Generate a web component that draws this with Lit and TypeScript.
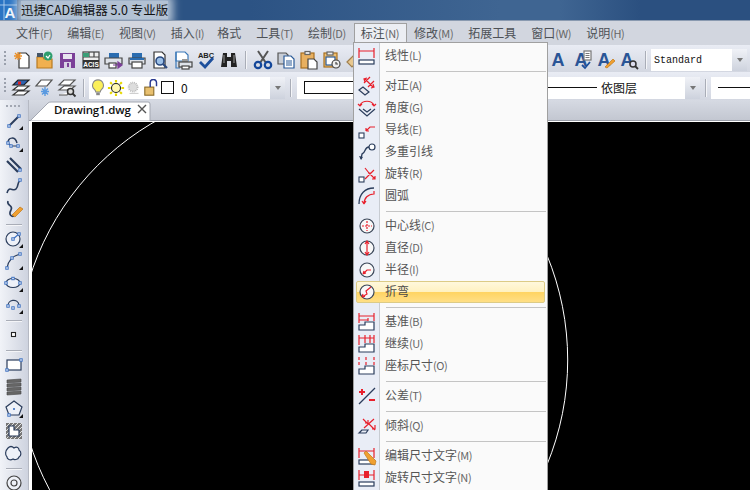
import { LitElement, html, css, svg } from "lit";
import { customElement } from "lit/decorators.js";

const NAVY = "#2b3d5c", RED = "#e8202c", BLUE = "#3c70c0";
const wrap = (b: unknown) => html`<svg class="ic" viewBox="0 0 20 20" fill="none" stroke-width="1.2">${b}</svg>`;
const h = (x: number, y: number) => svg`<rect x=${x - 1.2} y=${y - 1.2} width="2.400" height="2.400" fill="#fff" stroke=${BLUE} stroke-width="1"/>`;
const tri = svg`<path d="M19 15v4h-4z" fill="#111"/>`;

const tb1 = [
  svg`<path d="M7 3h7l3 3v12H7z" fill="#fff" stroke="#333"/><path d="M6 2v8M2 6h8M3 3l6 6M9 3L3 9" stroke="#e8902c" stroke-width="1.300"/>`,
  svg`<path d="M2 7h6l1 2h8v9H2z" fill="#f0b050" stroke="#b87a20"/><path d="M2 3h6v4H2z" fill="#456"/><circle cx="13" cy="6" r="4.500" fill="#2f9e6e"/><path d="M11 6l2 2 2-3" stroke="#fff"/>`,
  svg`<rect x="2" y="3" width="15" height="15" fill="#7b3f98"/><rect x="5" y="4" width="9" height="5" fill="#e8e4f0"/><rect x="6" y="12" width="7" height="6" fill="#d8d0e4"/><rect x="9" y="13" width="2" height="4" fill="#7b3f98"/>`,
  svg`<rect x="2" y="2" width="16" height="16" fill="#eee" stroke="#444"/><path d="M2 7h16M8 2v5M13 2v5" stroke="#444"/><rect x="2" y="3" width="6" height="4" fill="#3a9e78"/><rect x="2" y="10" width="16" height="8" fill="#333"/><text x="10" y="17" font-size="6.500" font-weight="700" text-anchor="middle" fill="#fff" stroke="none" font-family="Liberation Sans">ACIS</text>`,
  svg`<rect x="5" y="3" width="10" height="5" fill="#2a6cb0"/><path d="M1 8h17v6H1z" fill="#dfe3ea" stroke="#444"/><rect x="5" y="13" width="7" height="5" fill="#fff" stroke="#444"/><path d="M9 15h7M14 12l4 3-4 3z" fill="#7b3f98" stroke="#7b3f98"/>`,
  svg`<rect x="5" y="3" width="10" height="5" fill="#2a6cb0"/><path d="M2 8h16v6H2z" fill="#dfe3ea" stroke="#444"/><rect x="5" y="12" width="10" height="6" fill="#fff" stroke="#444"/><path d="M3 9h14" stroke="#2a6cb0" stroke-width="2"/>`,
  svg`<path d="M4 2h8l3 3v13H4z" fill="#fff" stroke="#333"/><circle cx="10" cy="11" r="4" fill="#9cc0e8" stroke="#2b4a80" stroke-width="1.600"/><path d="M13 14l4 4" stroke="#2b4a80" stroke-width="2.200"/>`,
  svg`<path d="M3 2h9l3 3v6H3z" fill="#fff" stroke="#3a78b8"/><path d="M3 2v16h4" stroke="#3a78b8"/><rect x="9" y="9" width="6" height="3" fill="#999"/><rect x="6" y="12" width="13" height="5" fill="#dfe3ea" stroke="#444"/><rect x="9" y="16" width="7" height="3" fill="#fff" stroke="#444"/>`,
  svg`<text x="10" y="7.500" font-size="7.500" font-weight="700" text-anchor="middle" fill="#222" stroke="none" font-family="Liberation Sans">ABC</text><path d="M4 12l5 5 8-9" stroke="#1d4f9c" stroke-width="2.800"/>`,
  svg`<path d="M4 3h4v4h4V3h4l2 14h-6v-6H8v6H2z" fill="#222"/><path d="M5 5v8M15 5v8" stroke="#888"/>`,
];
const tb1b = [
  svg`<path d="M5 1l8 12M15 1L7 13" stroke="#555" stroke-width="2"/><circle cx="5" cy="15" r="3.200" stroke="#14479a" stroke-width="2.200"/><circle cx="15" cy="15" r="3.200" stroke="#14479a" stroke-width="2.200"/>`,
  svg`<path d="M2 3h8l2 2v9H2z" fill="#c8cdd6" stroke="#555"/><path d="M8 6h7l3 3v9H8z" fill="#fff" stroke="#2a5a98"/><path d="M10 11h6M10 13h6M10 15h6" stroke="#2a5a98"/>`,
  svg`<rect x="2" y="3" width="13" height="15" fill="#e8b060" stroke="#a87020"/><rect x="6" y="1.500" width="5" height="3" fill="#eee" stroke="#666"/><path d="M9 9h6l3 3v7H9z" fill="#fff" stroke="#444"/>`,
  svg`<rect x="2" y="3" width="13" height="14" fill="#f0c070" stroke="#a87020"/><rect x="5" y="2" width="6" height="3" fill="#eee" stroke="#666"/><rect x="4" y="7" width="9" height="8" fill="#fff" stroke="#2a5a98"/><circle cx="14" cy="14" r="4" fill="#eee" stroke="#444"/><path d="M14 12v2h2" stroke="#444"/>`,
  svg`<path d="M2 12l8-8 5 5-8 8z" fill="#e8c890" stroke="#a08050"/><path d="M10 4l2-2 5 5-2 2z" fill="#777"/>`,
];
const abase = (x: unknown) => svg`<text x="8" y="16" font-size="18" font-weight="700" text-anchor="middle" fill="#2a5596" stroke="none" font-family="Liberation Sans">A</text>${x}`;
const tb1c = [
  abase(svg``),
  abase(svg`<rect x="11" y="1" width="7" height="9" fill="#fff" stroke="#777"/><path d="M12.500 3.500h4M12.500 5.500h4M12.500 7.500h4" stroke="#777"/><path d="M9 15l3 3 5-6" stroke="#1d4f9c" stroke-width="1.800"/>`),
  abase(svg`<path d="M9 17l8-8 2 2-8 7z" fill="#f0a030" stroke="#c07818" stroke-width=".7"/>`),
  abase(svg`<circle cx="14" cy="14" r="3" fill="#dde" stroke="#333" stroke-width="1.500"/><path d="M16 16l3 3" stroke="#333" stroke-width="1.800"/>`),
];
const tb2 = [
  svg`<path d="M2 7l5-5h11l-5 5z" fill="#2f62b0" stroke="#222"/><rect x="7" y="3.500" width="3" height="3" fill="#e02020"/><path d="M2 12l5-4h11l-5 4zM2 17l5-4h11l-5 4z" fill="#fff" stroke="#333"/>`,
  svg`<path d="M2 8l5-6h11l-5 6zM2 8h8" stroke="#555" fill="#fff"/><path d="M11 9v9M7 13.500h8M8 10.500l6 6M14 10.500l-6 6" stroke="#5a9ae0" stroke-width="1.400"/>`,
  svg`<path d="M2 7l5-5h11l-5 5zM2 12l5-4h11l-5 4zM2 17h8l2-3" stroke="#555" fill="#fff"/><circle cx="13.500" cy="13.500" r="3" fill="#ddd" stroke="#333" stroke-width="1.500"/><path d="M15.500 15.500l3 3" stroke="#333" stroke-width="1.800"/>`,
];
const bulb = wrap(svg`<path d="M10 1a6 6 0 0 0-4 10.500c1 1 1.500 2 1.500 3h5c0-1 .5-2 1.500-3A6 6 0 0 0 10 1z" fill="#fbef5a" stroke="#888"/><rect x="8" y="15" width="4" height="3" fill="#888"/>`);
const sun = wrap(svg`<circle cx="10" cy="10" r="5" fill="#fff8b0" stroke="#222"/><path d="M10 1v3M10 16v3M1 10h3M16 10h3M3.500 3.500l2 2M14.500 14.500l2 2M3.500 16.500l2-2M14.500 5.500l2-2" stroke="#e6d800" stroke-width="2.400"/>`);
const frost = wrap(svg`<circle cx="9" cy="9" r="5" fill="#ddd" stroke="#bbb" stroke-dasharray="1 1" stroke-width="2"/><path d="M5 16h10" stroke="#ccc"/>`);
const lock = wrap(svg`<rect x="2" y="9" width="10" height="9" fill="#e8c070" stroke="#8a6a28"/><path d="M8 9V4a3.500 3.500 0 0 1 7 0v4" stroke="#2a3a90" stroke-width="1.600"/>`);

const lefts = [
  [svg`<path d="M5 15L15 5" stroke=${NAVY} stroke-width="2"/>${h(5, 15)}${h(15, 5)}`, 1],
  [svg`<path d="M4 10c0-6 7-7 9 0" stroke=${NAVY} stroke-width="1.500"/><path d="M4 10l3 3h6" stroke=${NAVY}/>${h(4, 10)}${h(7, 13)}${h(14, 13)}`, 1],
  [svg`<path d="M3 6l11 11M6 3l11 11" stroke=${NAVY} stroke-width="2.200"/>${h(16, 15)}`, 0],
  [svg`<path d="M3 16c2-8 6-1 9-4s1-7 4-8" stroke=${NAVY} stroke-width="1.600"/>${h(16, 3)}`, 0],
  [svg`<path d="M4 2c-2 5 6 4 3 9s1 7 3 6" stroke=${NAVY} stroke-width="1.600"/><path d="M8 16l8-8 3 2-8 8z" fill="#f0a030" stroke="#c07818" stroke-width=".7"/>`, 0],
  "sep",
  [svg`<circle cx="9" cy="10" r="7" fill="#eef1f8" stroke=${NAVY} stroke-width="1.200"/><path d="M9 10l6-5" stroke=${BLUE}/>${h(9, 10)}${h(15, 5)}`, 1],
  [svg`<path d="M3 17C4 9 9 5 16 3" stroke=${NAVY} stroke-width="1.200"/>${h(3, 17)}${h(8, 7)}${h(16, 3)}`, 1],
  [svg`<ellipse cx="9" cy="10" rx="7" ry="4.500" fill="#eef1f8" stroke=${NAVY} stroke-width="1.200"/>${h(2, 10)}${h(16, 10)}${h(9, 5.500)}`, 1],
  [svg`<path d="M4 12C3 4 14 3 15 10" stroke=${NAVY} stroke-width="1.200"/>${h(4, 11)}${h(9, 13)}${h(15, 11)}`, 1],
  "sep",
  [svg`<rect x="7.500" y="7.500" width="4" height="4" fill="#fff" stroke="#222" stroke-width="1.100"/>`, 0],
  "sep",
  [svg`<rect x="3" y="5" width="14" height="10" fill="#fff" stroke=${NAVY} stroke-width="1.200"/>${h(3, 15)}${h(17, 5)}`, 0],
  [svg`<path d="M3 3l14-1v3L3 6zM3 7l14-1v3L3 10zM3 11l14-1v3L3 14zM3 15l14-1v3l-14 1z" fill="#666" stroke="#444" stroke-width=".6"/>`, 0],
  [svg`<path d="M10 2l8 6-3 8H5L2 8z" fill="#eef1f8" stroke=${NAVY} stroke-width="1.200"/><path d="M9 10h2M10 9v2" stroke=${BLUE}/>${h(5, 16)}`, 1],
  [svg`<rect x="2" y="2" width="16" height="16" fill="#777"/><path d="M2 6l4-4M2 10l8-8M2 14l12-12M2 18L18 2M6 18L18 6M10 18l8-8M14 18l4-4" stroke="#fff" stroke-width=".8"/><path d="M5 5h5v4h5v6H5z" fill="#fff" stroke=${NAVY}/>`, 0],
  [svg`<path d="M4 5c3-3 5-1 6 0 3-2 5 0 5 2 3 2 2 6 0 7-1 3-5 3-6 2-3 2-6 0-6-2-2-2-2-6 1-9z" fill="#eef1f8" stroke=${NAVY} stroke-width="1.200"/>`, 0],
  "sep",
  [svg`<circle cx="10" cy="10" r="7" fill="#eef1f8" stroke="#444" stroke-width="1.200"/><circle cx="10" cy="10" r="3" stroke="#444" stroke-width="1.200"/>`, 0],
] as const;

const dimBase = svg`<rect x="2" y="14" width="15" height="4" fill="#fff" stroke=${NAVY}/>`;
const stair = svg`<path d="M2 18v-5h6v-3h9v8z" fill="#fff" stroke=${NAVY}/>`;
const circ = (x: unknown) => svg`<circle cx="10" cy="10" r="7" fill="#f8f8f8" stroke="#3a4658" stroke-width="1.200"/>${x}`;
const sq = svg`<rect x="2" y="13" width="5" height="5" fill="#fff" stroke=${NAVY} stroke-width="1.100"/>`;

type Row = { t: string; k?: string; i: unknown; hot?: boolean } | null;
const rows: Row[] = [
  { t: "线性", k: "(L)", i: svg`<path d="M2 2v10M17 2v10M2 5h15" stroke=${RED}/>${dimBase}` },
  null,
  { t: "对正", k: "(A)", i: svg`<path d="M2 14l4-3 6 5-4 3z" fill="#e8e8ee" stroke=${NAVY}/><path d="M7 7l6-6M11 11l6-6M8 3l8 8M10 2l-3 1 1 3M14 12l3-1-1-3" stroke=${RED}/>` },
  { t: "角度", k: "(G)", i: svg`<path d="M3 7c3-5 11-5 14 0" stroke=${RED}/><path d="M1 6l2 2 2-2M15 6l2 2 2-2" stroke=${RED}/><path d="M2 11l8 7 8-7M6 11l4 3 4-3" stroke=${NAVY}/>` },
  { t: "导线", k: "(E)", i: svg`${sq}<path d="M9 11l4-4h5M9 11h3M9 11V8" stroke=${RED}/>` },
  { t: "多重引线", k: "", i: svg`<circle cx="15" cy="5" r="3" fill="#fff" stroke=${NAVY}/><path d="M12 5C7 5 9 11 5 12l-1 5" stroke=${NAVY} stroke-width="1.300"/><path d="M2 14l2 4 2-3z" fill=${NAVY}/>` },
  { t: "旋转", k: "(R)", i: svg`${sq}<path d="M8 15L17 6M8 4l4 5M12 9l6 6M14 9h-3M18 12v3h-3" stroke=${RED}/>` },
  { t: "圆弧", k: "", i: svg`<path d="M2 18C2 8 8 2 17 2" stroke=${NAVY} stroke-width="1.300"/><path d="M7 18C7 12 11 8 17 8V5M7 18l-2-3M7 18l2-3" stroke=${RED}/>` },
  null,
  { t: "中心线", k: "(C)", i: circ(svg`<path d="M10 5v10M5 10h10" stroke=${RED} stroke-dasharray="2 1"/>`) },
  { t: "直径", k: "(D)", i: circ(svg`<path d="M10 3.500v13M8 6l2-3 2 3M8 14l2 3 2-3" stroke=${RED}/>`) },
  { t: "半径", k: "(I)", i: circ(svg`<path d="M6 14l4-4h4M6 14l3-1M6 14l1-3" stroke=${RED} stroke-width="1.200"/>`) },
  { t: "折弯", k: "", hot: true, i: circ(svg`<path d="M5 15l5-3-1-3 5-4M5 15l3-.5M5 15l1-3" stroke=${RED} stroke-width="1.200"/>`) },
  null,
  { t: "基准", k: "(B)", i: svg`${stair}<path d="M2 1v10M17 1v8M2 4h15M2 8h9M11 6v3" stroke=${RED}/>` },
  { t: "继续", k: "(U)", i: svg`${stair}<path d="M2 1v10M8 1v8M13 1v8M17 1v8M2 4h15" stroke=${RED}/>` },
  { t: "座标尺寸", k: "(O)", i: svg`${stair}<path d="M2 1v10M9 1v8M17 1v8" stroke=${RED} stroke-dasharray="3 2"/>` },
  null,
  { t: "公差", k: "(T)", i: svg`<path d="M2 18L18 2" stroke=${NAVY} stroke-width="1.200"/><path d="M2 6h6M5 3v6M12 14h6" stroke=${RED} stroke-width="2"/>` },
  null,
  { t: "倾斜", k: "(Q)", i: svg`<path d="M2 17h7l2-3H5zM2 17l3-3" stroke=${NAVY}/><path d="M7 12L17 3M6 3l5 5M12 8l6 6M18 9v4h-3M11 4v3H8" stroke=${RED}/>` },
  null,
  { t: "编辑尺寸文字", k: "(M)", i: svg`<path d="M2 2v10M17 2v10M2 5h15" stroke=${RED}/>${dimBase}<path d="M7 7l2-2 10 10-1 4-4-1z" fill="#f0a030" stroke="#c07818" stroke-width=".7"/>` },
  { t: "旋转尺寸文字", k: "(N)", i: svg`<path d="M2 2v10M17 2v10M2 7h15" stroke=${RED}/><rect x="7" y="3" width="5" height="7" fill=${RED}/>${dimBase}` },
];

const menus: [string, string][] = [
  ["文件", "(F)"], ["编辑", "(E)"], ["视图", "(V)"], ["插入", "(I)"], ["格式", ""], ["工具", "(T)"],
  ["绘制", "(D)"], ["标注", "(N)"], ["修改", "(M)"], ["拓展工具", ""], ["窗口", "(W)"], ["说明", "(H)"],
];

@customElement("app-root")
export class AppRoot extends LitElement {
  static styles = css`
    :host { display: block; position: relative; width: 750px; height: 490px; overflow: hidden;
      font-family: "Noto Sans CJK SC", "Liberation Sans", sans-serif; background: #d2d6df; }
    .ic { width: 20px; height: 20px; display: block; flex: none; }
    .title { height: 21px; display: flex; align-items: center; box-sizing: border-box; border-bottom: 1px solid #8a9ab0; overflow: hidden;
      background: linear-gradient(90deg, #1f4a7e 0, #2c5384 160px, #2c5384 250px, #3f6592 500px, #3f6592 560px, #2b5080 640px, #2b5080 100%); }
    .logo { width: 17px; height: 20px; flex: none; display: block; }
    .title span { margin-left: 4px; font-size: 12.500px; line-height: 18px; color: #111; white-space: nowrap;
      background: rgba(214, 222, 232, .8); box-shadow: 0 0 8px 5px rgba(214, 222, 232, .8); }
    .menubar { height: 24px; box-sizing: border-box; display: flex; align-items: center; gap: 15px; padding: 0 0 2px 16px;
      background: #d2d6df; font-size: 12px; color: #4d5156; }
    .menubar > div { white-space: nowrap; position: relative; }
    .menubar > .tight { margin-left: -2px; }
    .key { font-size: 11px; color: #666; letter-spacing: -.4px; }
    .open::before { content: ""; position: absolute; left: -7px; right: -8px; top: -1px; bottom: -3px; background: #eceef3;
      border: 1px solid #a0a0a0; border-bottom: none; }
    .open > * { position: relative; }
    .bar { display: flex; align-items: center; position: relative; box-sizing: border-box; padding-top: 3px; background: linear-gradient(#e9ecf4, #d3d7e1); }
    .b1 { height: 27px; padding-left: 10px; }
    .b2 { height: 28px; padding-left: 9px; }
    .grip { position: absolute; left: 4px; top: 6px; bottom: 6px; width: 2px;
      background: repeating-linear-gradient(#9aa0ac 0 2px, transparent 2px 4px); }
    .cell { width: 23px; display: flex; justify-content: center; flex: none; }
    .vsep { width: 1px; height: 18px; background: #a9adb7; box-shadow: 1px 0 0 #f4f5f8; margin: 0 5px; flex: none; }
    .gapA { width: 182px; flex: none; }
    .combo { background: #fff; height: 22px; display: flex; align-items: center; flex: none; position: relative; box-sizing: border-box; font-size: 12px; color: #111; }
    .drop { width: 15px; align-self: stretch; background: linear-gradient(#f0f2f7, #cdd2dd); margin-left: auto; display: flex; align-items: center; justify-content: center; flex: none; }
    .drop::after { content: ""; border: 3.500px solid transparent; border-top: 4px solid #777; border-bottom: none; }
    .std { width: 96px; font-family: "Liberation Mono", monospace; font-size: 10px; padding-left: 3px; }
    .layer { width: 196px; }
    .layer .ic { width: 18px; height: 18px; }
    .swatch { width: 11px; height: 11px; border: 1px solid #111; flex: none; }
    .zero { margin-left: 7px; font-size: 12px; }
    .ltype { width: 403px; margin-left: 1px; }
    .lbox { width: 235px; height: 11px; border: 1px solid #111; border-right: none; margin-left: 7px; flex: none; }
    .lline { flex: 1; height: 1px; background: #111; }
    .ltxt { margin: 0 48px 0 4px; font-size: 12px; }
    .ltype2 { flex: 1; padding-left: 7px; }
    .ltype2 i { display: block; width: 100%; height: 1px; background: #111; }
    .work { display: flex; height: 390px; }
    .left { width: 29px; flex: none; box-sizing: border-box; padding-top: 10px; position: relative; display: flex; flex-direction: column; align-items: center;
      background: linear-gradient(90deg, #f1f3f8, #ced3df); border-right: 1px solid #b5b9c3; }
    .left::before { content: ""; position: absolute; left: 6px; top: 5px; width: 15px; height: 2px;
      background: repeating-linear-gradient(90deg, #a2a7b2 0 2px, transparent 2px 4px); }
    .lcell { height: 22px; width: 20px; display: flex; align-items: center; flex: none; }
    .lsep { height: 1px; width: 16px; margin: 4px 0 3px; background: #a9adb7; box-shadow: 0 1px 0 #f4f5f8; flex: none; }
    .main { flex: 1; display: flex; flex-direction: column; min-width: 0; }
    .tabs { height: 20px; flex: none; position: relative; background: linear-gradient(#d6dae3, #c3c7d1); border-bottom: 1px solid #9a9ea8; }
    .tabshape { position: absolute; left: 0; top: 1px; width: 125px; height: 20px; display: block; }
    .tab { position: absolute; left: 25px; top: 2px; font: 600 11.500px/16px "Open Sans", "Liberation Sans", sans-serif; letter-spacing: -.2px; color: #111; white-space: nowrap; }
    .x { position: absolute; left: 108px; top: 4px; width: 10px; height: 10px; display: block; }
    .canvasWrap { flex: 1; border-left: 3px solid #fff; border-top: 1px solid #fff; background: #000; overflow: hidden; }
    .canvasWrap svg { display: block; }
    .menu { position: absolute; left: 353px; top: 42px; width: 195px; height: 460px; box-sizing: border-box; padding-top: 2px; border: 1px solid #a0a0a0;
      background: linear-gradient(90deg, #e9edf6 0 25px, #c8ccd2 25px 26px, #fafafa 26px); color: #555; font-size: 12px; }
    .row { height: 22px; display: flex; align-items: center; position: relative; box-sizing: border-box; }
    .row .ic { margin-left: 3px; }
    .row .t { margin-left: 8px; padding-bottom: 3px; white-space: nowrap; }
    .row.hot { margin: 0 2px; background: linear-gradient(#fff8dc 0, #fff1c0 50%, #ffd463 52%, #ffdf86 100%); border: 1px solid #dccb86; border-radius: 2px; color: #4a4a4a; }
    .row.hot .ic { margin-left: 0; }
    .msep { height: 8px; display: flex; align-items: center; padding-left: 32px; padding-right: 1px; }
    .msep i { display: block; height: 1px; width: 100%; background: #c4c4c4; }
  `;

  private menuClass(a: string) {
    if (a === "标注") return "open";
    if (a === "格式") return "tight";
    return "";
  }

  render() {
    return html`
      <div class="title">
        <svg class="logo" viewBox="0 0 17 20">
          <rect width="17" height="20" fill="#2a74c4"/>
          <path d="M4 0v20M0 5h17" stroke="#bcd8f4" stroke-width=".8"/>
          <text x="10" y="18" font-size="15" font-weight="700" text-anchor="middle" fill="#f4f8fc" font-family="Liberation Sans">A</text>
        </svg>
        <span>迅捷CAD编辑器 5.0 专业版</span>
      </div>
      <div class="menubar">
        ${menus.map(([a, k]) => html`<div class=${this.menuClass(a)}><span>${a}<span class="key">${k}</span></span></div>`)}
      </div>
      <div class="bar b1">
        <div class="grip"></div>
        ${tb1.map((i) => html`<div class="cell">${wrap(i)}</div>`)}
        <div class="vsep"></div>
        ${tb1b.map((i) => html`<div class="cell">${wrap(i)}</div>`)}
        <div class="gapA"></div>
        ${tb1c.map((i) => html`<div class="cell">${wrap(i)}</div>`)}
        <div class="vsep"></div>
        <div class="combo std"><span>Standard</span><div class="drop"></div></div>
      </div>
      <div class="bar b2">
        <div class="grip"></div>
        ${tb2.map((i) => html`<div class="cell">${wrap(i)}</div>`)}
        <div class="vsep"></div>
        <div class="combo layer">
          ${bulb}${sun}${frost}${lock}
          <div class="swatch"></div><span class="zero">0</span>
          <div class="drop"></div>
        </div>
        <div class="vsep"></div>
        <div class="combo ltype">
          <div class="lbox"></div><div class="lline"></div>
          <span class="ltxt">依图层</span><div class="drop"></div>
        </div>
        <div class="vsep"></div>
        <div class="combo ltype2"><i></i></div>
      </div>
      <div class="work">
        <div class="left">
          ${lefts.map((l) => l === "sep"
            ? html`<div class="lsep"></div>`
            : html`<div class="lcell">${wrap(svg`${l[0]}${l[1] ? tri : ""}`)}</div>`)}
        </div>
        <div class="main">
          <div class="tabs">
            <svg class="tabshape" viewBox="0 0 125 20">
              <path d="M1 20L19 2q1-1 3-1h97q2 0 2 2v17z" fill="#fff" stroke="#a4a8b2"/>
            </svg>
            <div class="tab">Drawing1.dwg</div>
            <svg class="x" viewBox="0 0 10 10"><path d="M1 1l8 8M9 1L1 9" stroke="#555" stroke-width="1.400"/></svg>
          </div>
          <div class="canvasWrap">
            <svg width="721" height="368" viewBox="33 122 717 368">
              <circle cx="291.400" cy="360" r="275.300" fill="none" stroke="#fff" stroke-width="1"/>
            </svg>
          </div>
        </div>
      </div>
      <div class="menu">
        ${rows.map((r) => r === null
          ? html`<div class="msep"><i></i></div>`
          : html`<div class="row ${r.hot ? "hot" : ""}">${wrap(r.i)}<span class="t">${r.t}<span class="key">${r.k}</span></span></div>`)}
      </div>
    `;
  }
}
